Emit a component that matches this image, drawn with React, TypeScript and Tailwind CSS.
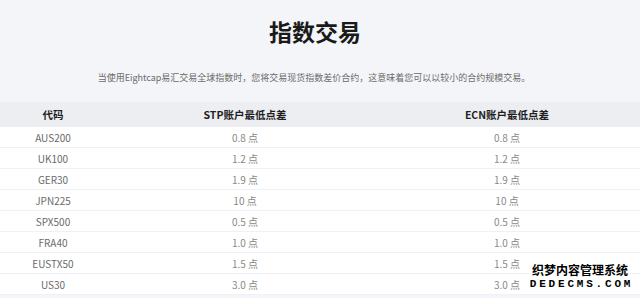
const rows = [
  { code: 'AUS200', stp: '0.8 点', ecn: '0.8 点' },
  { code: 'UK100', stp: '1.2 点', ecn: '1.2 点' },
  { code: 'GER30', stp: '1.9 点', ecn: '1.9 点' },
  { code: 'JPN225', stp: '10 点', ecn: '10 点' },
  { code: 'SPX500', stp: '0.5 点', ecn: '0.5 点' },
  { code: 'FRA40', stp: '1.0 点', ecn: '1.0 点' },
  { code: 'EUSTX50', stp: '1.5 点', ecn: '1.5 点' },
  { code: 'US30', stp: '3.0 点', ecn: '3.0 点' },
];

const cols = 'grid grid-cols-[106px_278px_246px_1fr]';

export default function App() {
  return (
    <div className="relative w-[640px] h-[298px] overflow-hidden bg-[#f4f5f9] font-['Noto_Sans_CJK_SC','Noto_Sans',sans-serif]">
      {/* Heading */}
      <div className="pt-[14px] h-[102px] flex flex-col items-center">
        <h1 className="text-[23px] leading-[34px] font-bold text-[#1a1a1a] pr-[10px]">指数交易</h1>
        <p className="mt-[24px] text-[9px] leading-[12px] text-[#6b6b6b] pr-[12px]">
          当使用Eightcap易汇交易全球指数时，您将交易现货指数差价合约，这意味着您可以以较小的合约规模交易。
        </p>
      </div>

      {/* Table */}
      <div className={`${cols} h-[25px] items-center bg-[#eceef2] text-[10.5px] font-bold text-[#1f1f1f]`}>
        <div className="text-center">代码</div>
        <div className="text-center">STP账户最低点差</div>
        <div className="text-center">ECN账户最低点差</div>
        <div />
      </div>
      <div className="bg-white">
        {rows.map((r) => (
          <div
            key={r.code}
            className={`${cols} h-[21px] items-center border-b border-[#f0f1f4] text-[10px] text-[#6a6a6a]`}
          >
            <div className="text-center">{r.code}</div>
            <div className="text-center text-[#888]">{r.stp}</div>
            <div className="text-center text-[#888]">{r.ecn}</div>
            <div />
          </div>
        ))}
      </div>

      {/* Watermark */}
      <div className="absolute left-[531px] top-[262px] w-[98px] flex flex-col items-center text-black [text-shadow:1px_0_0_#fff,-1px_0_0_#fff,0_1px_0_#fff,0_-1px_0_#fff,1px_1px_0_#fff,-1px_-1px_0_#fff,1px_-1px_0_#fff,-1px_1px_0_#fff]">
        <div className="text-[12px] leading-[16px] font-bold">织梦内容管理系统</div>
        <div className="pl-[3px] font-['Liberation_Mono',monospace] text-[11px] leading-[12px] font-bold tracking-[2.8px]">DEDECMS.COM</div>
      </div>
    </div>
  );
}
